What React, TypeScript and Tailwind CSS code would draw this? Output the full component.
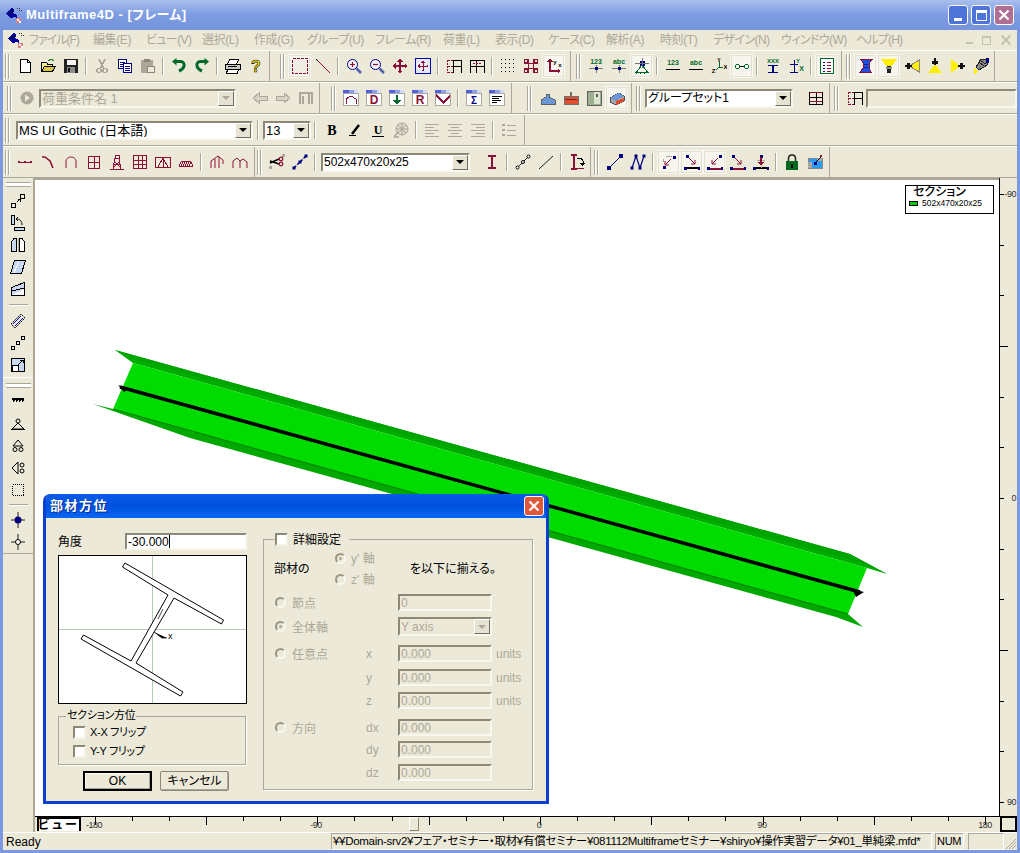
import React from "react";

const M = "#8B1038";
const N = "#000080";
const G = "#006A2A";
const K = "#000";
const D = "#ACA899";
const FACE = "bg-[#ECE9D8]";

const S = ({ children, s = 16, crisp = true }: { children: React.ReactNode; s?: number; crisp?: boolean }) => (
  <svg width={s} height={s} viewBox="0 0 16 16" fill="none" shapeRendering={crisp ? "crispEdges" : "geometricPrecision"}>
    {children}
  </svg>
);

const Node = ({ x, y, c = N, r = 1.5 }: { x: number; y: number; c?: string; r?: number }) => (
  <rect x={x - r} y={y - r} width={r * 2} height={r * 2} fill={c} />
);

const Tiny = ({ x, y, t, c = G, z = 7, w = 700 }: { x: number; y: number; t: string; c?: string; z?: number; w?: number }) => (
  <text x={x} y={y} fontSize={z} fontWeight={w} fill={c} fontFamily="Liberation Sans" textAnchor="middle" shapeRendering="geometricPrecision">
    {t}
  </text>
);

const Ln = ({ d, c = M, w = 1 }: { d: string; c?: string; w?: number }) => <path d={d} stroke={c} strokeWidth={w} />;

const Win = ({ children }: { children: React.ReactNode }) => (
  <S>
    <rect x="0.5" y="3.5" width="15" height="12" fill="#fff" stroke={D} />
    <rect x="0" y="0" width="15" height="3" fill="#5060E0" />
    <rect x="6" y="0" width="5" height="3" fill="#8C9CF0" />
    <rect x="11" y="0" width="4" height="3" fill="#D0D8FF" />
    {children}
  </S>
);

const Frame = ({ dash }: { dash: "left" | "mid" }) => (
  <S>
    <Ln c={K} d="M7.5 2V15M15.5 2V15M7.5 2.5H15.5M7.5 8.5H15.5" />
    {dash === "left" ? (
      <path d="M1.5 2V15M1.5 2.5H7M1.5 8.5H7M1.5 14.5H7" stroke={M} strokeDasharray="2 1" />
    ) : (
      <Ln c={K} d="M1.5 2V15M1.5 2.5H7M1.5 8.5H7" />
    )}
    {dash === "mid" && <path d="M7.5 4V8M4 5.5H12" stroke={M} strokeDasharray="2 1" />}
  </S>
);

const icons: Record<string, React.ReactNode> = {
  new: <S><path d="M3.5 1.5H10.5L13.5 4.5V14.5H3.5Z" fill="#fff" stroke={K} /><path d="M10.5 1.5V4.5H13.5" stroke={K} /></S>,
  open: <S><path d="M1.5 4.5H6.5L7.5 6H12.5V13.5H1.5Z" fill="#F4E88C" stroke={K} /><path d="M4.5 8.5H15.5L12.5 13.5H1.5Z" fill="#D8C848" stroke={K} /><path d="M9 3C10 1 12 1 14 3" stroke="#2A7A2A" strokeWidth="1.5" /></S>,
  save: <S><rect x="1" y="1" width="14" height="14" fill="#222" /><rect x="3.5" y="1.5" width="9" height="5" fill="#F4F4F0" /><rect x="4" y="9" width="8" height="6" fill="#8C8C8C" /><rect x="5" y="10" width="2" height="4" fill="#111" /></S>,
  cut: <S><Ln c={D} w={1.5} d="M5 1L9.5 10M11 1L6.5 10" /><circle cx="5" cy="12.5" r="2.2" stroke={D} strokeWidth="1.5" /><circle cx="11" cy="12.5" r="2.2" stroke={D} strokeWidth="1.5" /></S>,
  copy: <S><rect x="1.5" y="1.5" width="8" height="9" fill="#fff" stroke={N} /><Ln c={N} d="M3 4H8M3 6H8M3 8H8" /><rect x="6.5" y="5.5" width="8" height="9" fill="#fff" stroke={N} /><Ln c={N} d="M8 8H13M8 10H13M8 12H13" /></S>,
  paste: <S><rect x="1" y="2" width="12" height="13" fill={D} rx="1" /><rect x="4" y="0.5" width="6" height="3" fill="#8C8878" /><rect x="7.5" y="8.5" width="7" height="6" fill="#ECE9D8" stroke="#8C8878" /></S>,
  undo: <S crisp={false}><path d="M3.5 3.5H9.5C12.5 3.5 13.5 6 13 8C12.5 10.5 10.5 12 8 13" stroke={G} strokeWidth="3" /><path d="M1 3.5L5.5 0V7.5Z" fill={G} /></S>,
  redo: <S crisp={false}><path d="M12.5 3.5H6.5C3.5 3.5 2.5 6 3 8C3.5 10.5 5.5 12 8 13" stroke={G} strokeWidth="3" /><path d="M15 3.5L10.5 0V7.5Z" fill={G} /></S>,
  print: <S><path d="M4.5 1.5H13.5L11.5 6.5H2.5Z" fill="#fff" stroke={K} /><rect x="0.5" y="6.5" width="15" height="5" fill="#C8C8C0" stroke={K} /><path d="M2.5 11.5H13.5L12 15.5H1.5Z" fill="#fff" stroke={K} /><Ln c={K} d="M3 8.5H12" /></S>,
  help: <S crisp={false}><text x="8" y="13.5" textAnchor="middle" fontSize="16" fontWeight="700" fontFamily="Liberation Sans" fill="#FFF000" stroke="#000" strokeWidth="0.6">?</text></S>,
  rect: <S><rect x="0.5" y="0.5" width="15" height="15" stroke={M} strokeDasharray="3 1" fill="#F0EEE4" /></S>,
  line: <S><Ln c={K} d="M1 1L3 3" /><Ln d="M3 3L15 15" /></S>,
  zin: <S crisp={false}><circle cx="6.5" cy="6.5" r="5" stroke={N} fill="#F4F4F8" /><path d="M4 6.5H9M6.5 4V9" stroke={M} strokeWidth="1.2" /><path d="M10.5 10.5L15 15" stroke="#5060A8" strokeWidth="2.5" /></S>,
  zout: <S crisp={false}><circle cx="6.5" cy="6.5" r="5" stroke={N} fill="#F4F4F8" /><path d="M4 6.5H9" stroke={M} strokeWidth="1.2" /><path d="M10.5 10.5L15 15" stroke="#5060A8" strokeWidth="2.5" /></S>,
  pan: <S><Ln w={2} d="M8 2V14M2 8H14" /><path d="M8 0L11 3.5H5ZM8 16L11 12.5H5ZM0 8L3.5 5V11ZM16 8L12.5 5V11Z" fill={M} /></S>,
  fit: <S><rect x="0.5" y="0.5" width="15" height="15" stroke="#0000C0" fill="#E8E8F4" /><Ln w={1} d="M8 3V13M3 8H13" /><path d="M8 2L10 4.5H6ZM8 14L10 11.5H6ZM2 8L4.5 6V10ZM14 8L11.5 6V10Z" fill={M} /></S>,
  frameL: <Frame dash="left" />,
  frameM: <Frame dash="mid" />,
  dots: <S>{[1, 5, 9, 13].map((y) => [1, 5, 9, 13].map((x) => <rect key={`${x}${y}`} x={x} y={y} width="1" height="1" fill={K} />))}</S>,
  grid: <S><Ln d="M1 5.5H15M1 10.5H15M5.5 1V15M10.5 1V15" /><rect x="1.5" y="1.5" width="3" height="3" stroke={M} /><rect x="11.5" y="1.5" width="3" height="3" stroke={M} /><rect x="1.5" y="11.5" width="3" height="3" stroke={M} /><rect x="11.5" y="11.5" width="3" height="3" stroke={M} /></S>,
  axis: <S><Ln w={1.5} d="M4 3V13H13" /><path d="M4 0L7 3.5H1ZM15 13L11.5 10V16Z" fill={M} /><Tiny x={9} y={6} t="y" c={K} z={6} /><Tiny x={14} y={9} t="x" c={K} z={6} /></S>,
  n123: <S><Tiny x={8} y={6} t="123" /><Ln c="#777" d="M1 10.5H15M8 7V15" /><Node x={8} y={10.5} /></S>,
  nabc: <S><Tiny x={8} y={6} t="abc" /><Ln c="#777" d="M1 10.5H15M8 7V15" /><Node x={8} y={10.5} /></S>,
  sup: <S><Node x={8} y={5} r={2.5} /><Ln c="#777" d="M1 5.5H15M8 0V10" /><Ln c={G} d="M8 7L2.5 14M8 7L13.5 14M1 14.5H15" /><Ln c={G} d="M3 15L2 16M7 15L6 16M11 15L10 16" /></S>,
  m123: <S><Tiny x={8} y={7} t="123" /><Ln c={K} d="M1 11.5H15" /></S>,
  mabc: <S><Tiny x={8} y={7} t="abc" /><Ln c={K} d="M1 11.5H15" /></S>,
  lcs: <S><Ln c={G} d="M8 3V9L5 12M8 9H12" /><Tiny x={8} y={4} t="Y" c={K} z={5} /><Tiny x={14.5} y={11} t="X" c={K} z={6} /><Tiny x={2.5} y={15} t="Z" c={K} z={6} /></S>,
  link: <S><circle cx="3.5" cy="8.5" r="2" stroke={G} /><circle cx="12.5" cy="8.5" r="2" stroke={G} /><Ln c={K} d="M6 8.5H10" /></S>,
  xxx: <S><Tiny x={8} y={5} t="XXX" z={6} /><Ln c={N} w={1.5} d="M3 7.5H13M3 14.5H13M8 7V15" /></S>,
  ybar: <S><Tiny x={10} y={5} t="Y" c={G} z={6} /><Ln c={N} d="M2 6.5H10M2 14.5H10M6 2V15" /><Tiny x={13.5} y={12.5} t="X" c={G} z={7} /></S>,
  table: <S><rect x="1.5" y="0.5" width="13" height="15" fill="#fff" stroke={G} /><Ln c={N} d="M4 4H6M4 7H6M4 10H6M4 13H6" /><Ln d="M8 4H12M8 7H12M8 10H12M8 13H12" /></S>,
  hbeam: <S><path d="M3 1.5H14L11 5V10L13 14.5H2L5 10V5Z" fill="#2050E0" stroke={M} /><Ln c="#0A2090" d="M6 6H10M6 9H10" /></S>,
  ylamp: <S><path d="M0 1H16L10 9H6Z" fill="#FFF000" /><path d="M6 8H10L9.5 15H6.5Z" fill="#222" /><rect x="5" y="9" width="6" height="2" fill="#888" /></S>,
  lampL: <S><path d="M15 2V14L7 9V7Z" fill="#FFF000" stroke="#888" /><path d="M1 7H8V9H1Z" fill="#111" /><rect x="3" y="5" width="3" height="6" fill="#111" /></S>,
  lampT: <S><path d="M8 6L15 15H1Z" fill="#FFF000" /><path d="M7 0H9V7H7Z" fill="#111" /><rect x="5" y="3" width="6" height="3" fill="#111" /></S>,
  lampR: <S><path d="M1 1V15L9 9V7Z" fill="#FFF000" /><path d="M8 7H15V9H8Z" fill="#111" /><rect x="10" y="5" width="3" height="6" fill="#111" /></S>,
  lampC: <S><path d="M8 1H14V7L6 12L3 9Z" fill="#888" stroke="#222" /><rect x="13" y="0" width="3" height="5" fill={N} /><path d="M1 10L5 13L3 16H1Z" fill="#FFF000" /><Ln c="#222" d="M6 4L11 8M8 3L13 6" /></S>,
  play: <S crisp={false}><circle cx="8" cy="8" r="6.5" fill={D} /><path d="M6 4.5L11 8L6 11.5Z" fill="#ECE9D8" /></S>,
  aL: <S><path d="M1 8L7 3V6H15V10H7V13Z" fill="#D8D4C4" stroke={D} /></S>,
  aR: <S><path d="M15 8L9 3V6H1V10H9V13Z" fill="#D8D4C4" stroke={D} /></S>,
  fG: <S><Ln c={D} d="M2 14V3H14V14M5 14V6M11 14V3" w={1.5} /></S>,
  lcFrame: <Win><Ln d="M3 14V9L8 6L13 9V14" /></Win>,
  lcD: <Win><Tiny x={8} y={14} t="D" c={M} z={12} /></Win>,
  lcArrow: <Win><Ln c={G} w={2} d="M8 5V12" /><path d="M4 10H12L8 15Z" fill={G} /></Win>,
  lcR: <Win><Tiny x={8} y={14} t="R" c={M} z={12} /></Win>,
  lcV: <Win><path d="M1 4L8 11L15 4V7L8 14L1 7Z" fill={M} /></Win>,
  lcSum: <Win><Tiny x={8} y={13.5} t="Σ" c={N} z={10} /></Win>,
  lcList: <Win><Ln c={K} d="M3 6H13M3 8H10M3 10H12M3 12H8" /></Win>,
  cap: <S><path d="M1 14V10L6 7V4H9V7L15 10V14Z" fill="#6C98D8" stroke="#606060" /></S>,
  box: <S><rect x="1" y="6" width="14" height="8" fill="#E05030" stroke="#707070" /><rect x="7" y="2" width="2" height="4" fill="#707070" /><rect x="2" y="9" width="12" height="1" fill="#703020" /></S>,
  split: <S><rect x="1" y="1" width="14" height="14" fill="#9CB090" stroke="#606060" /><rect x="8" y="2" width="6" height="12" fill="#DCE4D0" /><rect x="10" y="4" width="2" height="3" fill="#606060" /></S>,
  block: <S><path d="M1 8L10 3L15 6V11L7 15L1 12Z" fill="#A8A8A8" stroke="#505050" /><path d="M1 8L7 11L15 6L10 3Z" fill="#6C98D8" /><path d="M7 11V15L15 11V8Z" fill="#E05030" /></S>,
  gr: <S><rect x="1.5" y="2.5" width="13" height="12" stroke={K} /><Ln c={K} d="M8 3V14M2 7.5H14" /><Ln d="M2 11.5H14M8 11V14M2 2.5H14" /></S>,
  bold: <S crisp={false}><text x="8" y="13" textAnchor="middle" fontSize="14" fontWeight="700" fontFamily="Liberation Serif" fill="#000">B</text></S>,
  ital: <S><path d="M12 3L5 12" stroke="#000" strokeWidth="2.5" shapeRendering="geometricPrecision" /><Ln c={K} d="M2 13.5H9" /></S>,
  und: <S crisp={false}><text x="8" y="11.5" textAnchor="middle" fontSize="12" fontWeight="700" fontFamily="Liberation Serif" fill="#000">U</text><path d="M2 14.5H14" stroke="#000" /></S>,
  ball: <S crisp={false}><circle cx="9" cy="7" r="6" stroke={D} fill="#DDD9C8" /><path d="M3 7H15M9 1V13M5 3L13 11M13 3L5 11" stroke={D} /><path d="M1 15L5 10M1 15H6" stroke={D} strokeWidth="1.5" /></S>,
  al: <S><Ln c={D} d="M1 2.5H15M1 5.5H10M1 8.5H15M1 11.5H10M1 14.5H15" /></S>,
  ac: <S><Ln c={D} d="M1 2.5H15M4 5.5H12M1 8.5H15M4 11.5H12M1 14.5H15" /></S>,
  ar: <S><Ln c={D} d="M1 2.5H15M6 5.5H15M1 8.5H15M6 11.5H15M1 14.5H15" /></S>,
  li: <S><Ln c={D} w={2} d="M1 3H4M1 8H4M1 13H4" /><Ln c={D} d="M6 3H15M6 8H15M6 13H15" /></S>,
  b1: <S><Ln d="M2 8H14" /><Node x={2} y={8} c={M} r={1} /><Node x={8} y={8} c={M} r={1} /><Node x={14} y={8} c={M} r={1} /></S>,
  b2: <S crisp={false}><path d="M2 3H5L10 7L13 14" stroke={M} strokeWidth="1.6" /></S>,
  b3: <S crisp={false}><path d="M3 14V8C3 4 6 3 8 3C10 3 13 4 13 8V14" stroke={M} /></S>,
  b4: <S><rect x="2.5" y="2.5" width="11" height="12" stroke={M} /><Ln d="M8 3V15M2 8.5H14" /></S>,
  b5: <S><Ln d="M1 15H15M4 15L6 4H10L12 15M5 10H11M5 7L11 13M11 7L5 13" /><rect x="6" y="1" width="4" height="3" stroke={M} /></S>,
  b6: <S><rect x="1.5" y="1.5" width="13" height="13" stroke={M} /><Ln d="M6 2V14M10 2V14M2 6H14M2 10H14" /></S>,
  b7: <S><rect x="0.5" y="3.5" width="15" height="10" stroke={M} /><Ln d="M8 4V13M8 4L3 13M8 4L13 13" /></S>,
  b8: <S><Ln d="M3 7.5H13M1 12.5H15M3 8L1 12M5 8L3 12M7 8L5 12M9 8L7 12M11 8L9 12M13 8L11 12M13 8L15 12" /></S>,
  r1: <S crisp={false}><path d="M2 14V7L9 2L14 6V10M6 14V5M10 14V3" stroke={M} /></S>,
  r2: <S crisp={false}><path d="M1 14V7L5 4L8 7L11 5L15 8V14M8 14V7" stroke={M} /></S>,
  sc: <S crisp={false}><rect x="0" y="12" width="3" height="3" fill={D} /><rect x="13" y="0" width="3" height="3" fill={D} /><path d="M1 7L10 10M1 9L10 5" stroke="#000" strokeWidth="1.5" /><circle cx="12" cy="5" r="1.8" stroke={M} strokeWidth="1.3" /><circle cx="12" cy="10" r="1.8" stroke={M} strokeWidth="1.3" /></S>,
  sl: <S crisp={false}><path d="M2 14L14 2" stroke={N} strokeDasharray="3 1.5" strokeWidth="1.5" /><Node x={2} y={14} /><Node x={8} y={8} /><Node x={14} y={2} /></S>,
  ibar: <S><Ln w={2} d="M4 2H12M4 14H12M8 2V14" /></S>,
  nl: <S crisp={false}><path d="M2 14L14 2" stroke="#222" /><circle cx="2.5" cy="13.5" r="1.5" fill="#fff" stroke="#000" /><circle cx="8" cy="8" r="1.5" fill="#fff" stroke="#000" /><circle cx="13.5" cy="2.5" r="1.5" fill="#fff" stroke="#000" /></S>,
  pl: <S crisp={false}><path d="M1 15L15 2" stroke="#222" /></S>,
  rot: <S><Ln w={2} d="M2 1H8M2 15H8M5 1V15" /><Ln c={M} d="M8 14H15" /><Ln c={K} d="M8 4H12L14 7V10" /><path d="M11 9H16L13.5 12Z" fill={K} /></S>,
  nline: <S crisp={false}><path d="M2 14L14 2" stroke={N} /><Node x={2} y={14} r={2} /><Node x={14} y={2} r={2} /></S>,
  nn: <S crisp={false}><path d="M2 14L6 2L10 14L14 2" stroke={N} strokeWidth="1.2" /><Node x={2} y={14} /><Node x={6} y={2} /><Node x={10} y={14} /><Node x={14} y={2} /></S>,
  pn: <S><Node x={3} y={13} /><Node x={13} y={3} /><Ln c={D} d="M5 2H11M2 5V8" /><path d="M10 5L4 11M4 11V7M4 11H8" stroke={M} shapeRendering="geometricPrecision" /></S>,
  pb: <S><Node x={3} y={2} /><Ln c={K} w={1.5} d="M1 14H15" /><Node x={1} y={14} /><Node x={15} y={14} /><path d="M5 4L11 10M11 10V6M11 10H7" stroke={M} shapeRendering="geometricPrecision" /></S>,
  pm: <S><Node x={13} y={2} /><Ln c={M} w={2} d="M1 14.5H15" /><Node x={1} y={14.5} /><Node x={15} y={14.5} /><path d="M11 4L5 10M5 10V6M5 10H9" stroke={M} shapeRendering="geometricPrecision" /></S>,
  pd: <S><Node x={3} y={2} /><Ln d="M1 14.5H15" w={2} /><Node x={1} y={14} /><Node x={15} y={14} /><path d="M5 4L11 10M11 10V6M11 10H7" stroke={M} shapeRendering="geometricPrecision" /></S>,
  pv: <S><Node x={8} y={2} /><Ln c={K} w={1.5} d="M1 14H15" /><Node x={1} y={14} /><Node x={15} y={14} /><Ln c={D} d="M8 10V14M4 6H12" /><Ln w={2} d="M8 3V8" /><path d="M5 8H11L8 12Z" fill={M} /></S>,
  lock: <S crisp={false}><path d="M4.5 7V4.5C4.5 2.5 6 1 8 1C10 1 11.5 2.5 11.5 4.5V7" stroke="#222" strokeWidth="1.5" /><rect x="2" y="7" width="12" height="9" fill="#006A1E" /><rect x="7" y="10" width="2" height="4" fill="#000" /></S>,
  map: <S><path d="M1 4H15V14H1Z" fill="#2C9CF0" stroke="#888" /><path d="M1 8H5V14H1ZM10 4H15V7H10Z" fill="#A8A8A0" /><Node x={8} y={9} /><Ln c={K} d="M9 8L14 3" /><Node x={14} y={2} c={M} r={1} /></S>,
  l1: <S><rect x="1.5" y="10.5" width="4" height="4" stroke={K} /><rect x="10.5" y="1.5" width="4" height="4" stroke={K} /><path d="M7 9L10 6M10 6V8.5M10 6H7.5" stroke={K} /></S>,
  l2: <S><rect x="1.5" y="0.5" width="3" height="9" fill="#C8D8F0" stroke={K} /><rect x="4.5" y="12.5" width="10" height="3" fill="#C8D8F0" stroke={K} /><path d="M12 10C12 6 10 4 6 4M6 4L8 2M6 4L8 6" stroke={K} shapeRendering="geometricPrecision" /></S>,
  l3: <S><path d="M6.5 1.5H4L1.5 5V14.5H6.5Z" fill="#C8D8F0" stroke={K} /><path d="M9.5 1.5H12L14.5 5V14.5H9.5Z" fill="#fff" stroke={K} /><Ln c={D} d="M8 1V15" /></S>,
  l4: <S><path d="M4.5 1.5H15.5L11.5 14.5H0.5Z" fill="#C8D8F0" stroke={K} /><path d="M9 2L4 14" stroke="#fff" /></S>,
  l5: <S><path d="M1.5 6.5L14.5 1.5V14.5H1.5Z" fill="#C8D8F0" stroke={K} /><path d="M2 14L14 8V14Z" fill="#fff" /><path d="M2 10L14 7" stroke={K} /></S>,
  l6: <S crisp={false}><path d="M1 11L11 1L15 5L5 15Z" stroke={K} strokeDasharray="2 1" /><path d="M3 11L11 3M5 13L13 5" stroke="#0000C0" /></S>,
  l7: <S><rect x="1.5" y="11.5" width="3" height="3" stroke={K} /><rect x="6.5" y="6.5" width="3" height="3" stroke={K} /><rect x="11.5" y="1.5" width="3" height="3" stroke={K} /></S>,
  l8: <S><rect x="1.5" y="1.5" width="13" height="13" fill="#C8D8F0" stroke={K} /><rect x="2" y="8" width="6" height="6" fill="#fff" stroke={K} /><path d="M8 8L13 3M13 3V6M13 3H10" stroke={K} /></S>,
  l9: <S><Ln c={K} d="M2 4.5H14" w={2} /><Ln c={K} d="M3 8L5 5M6 8L8 5M9 8L11 5M12 8L14 5" /></S>,
  l10: <S crisp={false}><circle cx="8" cy="5" r="2" stroke={K} /><path d="M8 7L2 13H14ZM1 13.5H15" stroke={K} /></S>,
  l11: <S crisp={false}><path d="M8 2L3 8H13Z" stroke={K} /><circle cx="5" cy="11.5" r="2" stroke={K} /><circle cx="11" cy="11.5" r="2" stroke={K} /></S>,
  l12: <S crisp={false}><path d="M8 2L2 8L8 14Z" stroke={K} /><circle cx="12" cy="5" r="2" stroke={K} /><circle cx="12" cy="11" r="2" stroke={K} /></S>,
  l13: <S><rect x="2.5" y="2.5" width="11" height="11" stroke={K} strokeDasharray="1 1" /></S>,
  l14: <S crisp={false}><path d="M8 0V16M1 8H15" stroke="#222" /><circle cx="8" cy="8" r="3.5" fill={N} /></S>,
  l15: <S crisp={false}><path d="M8 0V16M1 8H15" stroke="#222" /><circle cx="8" cy="8" r="2.5" fill="#fff" stroke="#000" /></S>,
};

const Btn = ({ i, sel, short }: { i: string; sel?: boolean; short?: boolean }) => (
  <div className={`flex w-[23px] shrink-0 items-center justify-center ${short ? "h-[22px]" : "h-[24px]"} ${sel ? "border border-[#f8f7f2] bg-[#F6F5EE] shadow-[inset_0_0_0_1px_#E4E1D2]" : ""}`}>
    {icons[i]}
  </div>
);

const Sep = () => (
  <div className="flex w-[8px] shrink-0 justify-center">
    <div className="h-[18px] w-[2px] border-r border-white bg-[#ACA899]" />
  </div>
);

const Grip = () => (
  <div className="flex h-[25px] w-[5px] shrink-0 justify-between">
    <div className="w-[2px] border-l border-[#ACA899] bg-white" />
    <div className="w-[2px] border-l border-[#ACA899] bg-white" />
  </div>
);

const Tb = ({ className = "", children }: { className?: string; children: React.ReactNode }) => (
  <div className={`flex h-full shrink-0 items-center border-r border-r-[#ACA899] ${className}`}>{children}</div>
);

const Row = ({ children }: { children: React.ReactNode }) => (
  <div className="flex h-[32px] shrink-0 items-center border-t border-t-white border-b border-b-[#ACA899]">{children}</div>
);

const Sunken = "border-2 border-t-[#8C8878] border-l-[#8C8878] border-r-[#F8F7F0] border-b-[#F8F7F0]";

const Arrow = ({ off }: { off?: boolean }) => (
  <div className="flex h-full w-[16px] shrink-0 items-center justify-center border border-t-white border-l-white border-r-[#716F64] border-b-[#716F64] bg-[#E6E3D2]">
    <div className={`h-0 w-0 border-x-[4px] border-t-[4px] border-x-transparent ${off ? "border-t-[#ACA899]" : "border-t-black"}`} />
  </div>
);

const Combo = ({ t, cls, off, text = "text-[12px]" }: { t: string; cls: string; off?: boolean; text?: string }) => (
  <div className={`flex h-[19px] shrink-0 items-center ${Sunken} ${cls} ${off ? "bg-[#ECE9D8] text-[#ACA899]" : "bg-white text-black"}`}>
    <span className={`min-w-0 flex-1 truncate pl-[1px] leading-none ${text}`}>{t}</span>
    <Arrow off={off} />
  </div>
);

const menu: [string, string][] = [
  ["ファイル(F)", "w-[64px] tracking-[-1px]"], ["編集(E)", "w-[53px] tracking-[-0.4px]"], ["ビュー(V)", "w-[56px] tracking-[-0.6px]"], ["選択(L)", "w-[52px] tracking-[-0.4px]"],
  ["作成(G)", "w-[53px] tracking-[-0.4px]"], ["グループ(U)", "w-[68px] tracking-[-0.6px]"], ["フレーム(R)", "w-[68px] tracking-[-0.6px]"], ["荷重(L)", "w-[52px] tracking-[-0.4px]"],
  ["表示(D)", "w-[53px] tracking-[-0.4px]"], ["ケース(C)", "w-[58px] tracking-[-0.6px]"], ["解析(A)", "w-[54px] tracking-[-0.4px]"], ["時刻(T)", "w-[53px] tracking-[-0.4px]"],
  ["デザイン(N)", "w-[68px] tracking-[-0.6px]"], ["ウィンドウ(W)", "w-[75px] tracking-[-0.6px]"], ["ヘルプ(H)", "w-[50px] tracking-[-0.8px]"],
];

const Logo = () => (
  <svg width="18" height="16" viewBox="0 0 18 16" shapeRendering="crispEdges">
    <path d="M1 6L7 1L10 3L7 5L12 8L12 11L9 10L6 11L3 9Z" fill="#0000A0" />
    <path d="M3 6L7 3L9 5L4 8Z" fill="#000050" />
    <path d="M11 11H16V16H11Z" fill="#E08080" />
    <path d="M12 12H14V14H12ZM14 14H16V16H14Z" fill="#fff" />
    <path d="M12 1H13V2H12ZM14 1H15V2H14ZM16 3H17V4H16ZM14 3H15V4H14Z" fill="#333" />
  </svg>
);

const Radio = ({ on }: { on?: boolean }) => (
  <div className="flex h-[11px] w-[11px] shrink-0 items-center justify-center rounded-full border-2 border-t-[#9a9684] border-l-[#9a9684] border-r-[#F8F7F0] border-b-[#F8F7F0]">
    {on && <div className="h-[3px] w-[3px] rounded-full bg-[#ACA899]" />}
  </div>
);

const Check = () => <div className="h-[13px] w-[13px] shrink-0 border-2 border-t-[#8C8878] border-l-[#8C8878] border-r-[#F4F2E6] border-b-[#F4F2E6] bg-white" />;

const Field = ({ v }: { v: string }) => (
  <div className={`flex h-[17px] w-[94px] shrink-0 items-center pl-[1px] text-[12px] leading-none text-[#ACA899] ${Sunken}`}>{v}</div>
);

const FRow = ({ r, lab, sub, v, u, cls, sel }: { r?: boolean; lab?: string; sub?: string; v?: string; u?: boolean; cls: string; sel?: boolean }) => (
  <div className={`flex h-[17px] items-center pl-[11px] text-[12px] leading-none text-[#ACA899] ${cls}`}>
    <div className="flex w-[91px] shrink-0 items-center gap-[6px]">
      {lab && <Radio on={r} />}
      {lab && <span className="pt-[2px]">{lab}</span>}
    </div>
    <div className="w-[32px] shrink-0 pt-[1px]">{sub}</div>
    {sel ? <Combo t="Y axis" cls="w-[94px]" off /> : <Field v={v || ""} />}
    {u && <span className="ml-[4px]">units</span>}
  </div>
);

const Cross = ({ c = "stroke-white" }: { c?: string }) => (
  <svg width="12" height="12" viewBox="0 0 12 12"><path d="M1.5 1.5L10.5 10.5M10.5 1.5L1.5 10.5" className={c} strokeWidth="2.2" /></svg>
);

const TBtn = ({ cls, children }: { cls: string; children: React.ReactNode }) => (
  <div className={`flex h-[20px] w-[20px] items-center justify-center rounded-[3px] border border-white ${cls}`}>{children}</div>
);

const bottomTicks = Array.from({ length: 25 }, (_, i) => i);
const rightTicks = Array.from({ length: 13 }, (_, i) => i);
const section = "M122.5 567L125 563L223.5 620L221.5 624L174 598L136 663L183 692L180.5 696L81 639L83.5 635L131 661L168 595Z";

export default function App() {
  return (
    <div className="relative flex h-[853px] w-[1020px] flex-col overflow-hidden bg-[#7C98DE] font-['Liberation_Sans','Noto_Sans_CJK_JP',sans-serif] text-[12px] text-black [font-feature-settings:'palt']">
      {/* title bar */}
      <div className="flex h-[30px] shrink-0 items-center bg-gradient-to-b from-[#A9C0EE] via-[#7C9BE0] to-[#7694DC] pl-[5px] pr-[6px]">
        <Logo />
        <span className="ml-[3px] text-[13px] font-bold tracking-[0.5px] text-white">Multiframe4D - [フレーム]</span>
        <div className="ml-auto flex gap-[3px]">
          <TBtn cls="bg-[#4F74D8] items-end pb-[3px]"><div className="h-[3px] w-[8px] bg-white" /></TBtn>
          <TBtn cls="bg-[#4F74D8]"><div className="h-[11px] w-[11px] border border-t-[3px] border-white" /></TBtn>
          <TBtn cls="bg-[#AE6F92]"><Cross /></TBtn>
        </div>
      </div>
      <div className={`mx-[3px] flex min-h-0 flex-1 flex-col ${FACE}`}>
        {/* menu */}
        <div className="flex h-[20px] shrink-0 items-center pl-[4px] text-[12px] text-[#ACA899]">
          <Logo />
          <div className="ml-[4px] flex">
            {menu.map(([t, w]) => (
              <span key={t} className={`whitespace-nowrap ${w}`}>{t}</span>
            ))}
          </div>
          <div className="ml-auto flex items-center gap-[9px] pr-[5px]">
            <div className="mt-[6px] h-[2px] w-[7px] bg-[#C0C4B0]" />
            <div className="h-[9px] w-[9px] border border-t-2 border-[#C0C4B0]" />
            <Cross c="stroke-[#C0C4B0]" />
          </div>
        </div>

        <Row>
          <Tb className="pr-[2px]">
            <div className="ml-[2px] mr-[3px]"><Grip /></div>
            <Btn i="new" /><Btn i="open" /><Btn i="save" /><Sep /><Btn i="cut" /><Btn i="copy" /><Btn i="paste" /><Sep /><Btn i="undo" /><Btn i="redo" /><Sep /><Btn i="print" /><Btn i="help" />
          </Tb>
          <Tb className="ml-[8px] pr-[5px]">
            <div className="ml-[2px] mr-[3px]"><Grip /></div>
            <Btn i="rect" sel /><Btn i="line" /><Sep /><Btn i="zin" /><Btn i="zout" /><Btn i="pan" /><Btn i="fit" /><Sep /><Btn i="frameL" /><Btn i="frameM" /><Sep /><Btn i="dots" /><Btn i="grid" /><Btn i="axis" sel />
          </Tb>
          <Tb className="ml-[3px] pr-[3px]">
            <div className="ml-[2px] mr-[3px]"><Grip /></div>
            <Btn i="n123" /><Btn i="nabc" /><Btn i="sup" sel /><Sep /><Btn i="m123" /><Btn i="mabc" /><Btn i="lcs" /><Btn i="link" sel /><Sep /><Btn i="xxx" /><Btn i="ybar" /><Sep /><Btn i="table" sel />
          </Tb>
          <Tb className="ml-[2px] pr-[2px]">
            <div className="ml-[2px] mr-[3px]"><Grip /></div>
            <Btn i="hbeam" sel /><Btn i="ylamp" sel /><Btn i="lampL" /><Btn i="lampT" /><Btn i="lampR" /><Btn i="lampC" />
          </Tb>
        </Row>

        <Row>
          <Tb className="pr-[2px]">
            <div className="ml-[4px] mr-[3px]"><Grip /></div>
            <Btn i="play" />
            <Combo t="荷重条件名 1" cls="w-[197px] ml-[1px]" off text="text-[13px]" />
            <div className="ml-[12px] flex"><Btn i="aL" /><Btn i="aR" /><Btn i="fG" /></div>
          </Tb>
          <Tb className="ml-[9px] pr-[3px]">
            <div className="ml-[2px] mr-[3px]"><Grip /></div>
            <Btn i="lcFrame" /><Btn i="lcD" /><Btn i="lcArrow" /><Btn i="lcR" /><Btn i="lcV" /><Sep /><Btn i="lcSum" /><Btn i="lcList" />
          </Tb>
          <Tb className="ml-[13px] pr-[3px]">
            <div className="ml-[2px] mr-[4px]"><Grip /></div>
            <Btn i="cap" /><Btn i="box" /><Btn i="split" /><Btn i="block" sel />
          </Tb>
          <Tb className="ml-[2px] pr-[2px]">
            <div className="ml-[2px] mr-[4px]"><Grip /></div>
            <Combo t="グループセット1" cls="w-[148px]" />
            <div className="ml-[11px]"><Btn i="gr" /></div>
          </Tb>
          <div className="ml-[2px] flex min-w-0 flex-1 items-center">
            <div className="ml-[2px] mr-[4px]"><Grip /></div>
            <Btn i="frameL" />
            <div className={`h-[19px] min-w-0 flex-1 ${Sunken}`} />
          </div>
        </Row>

        <Row>
          <Tb className="pr-[4px]">
            <div className="ml-[2px] mr-[6px]"><Grip /></div>
            <Combo t="MS UI Gothic (日本語)" cls="w-[237px]" text="text-[13px]" />
            <div className="mx-[4px] h-[20px] w-[2px] border-r border-white bg-[#ACA899]" />
            <Combo t="13" cls="w-[48px]" text="text-[13px]" />
            <Sep />
            <div className="ml-[1px]"><Btn i="bold" /></div><Btn i="ital" /><Btn i="und" /><Btn i="ball" /><Sep /><Btn i="al" /><Btn i="ac" /><Btn i="ar" /><Sep /><Btn i="li" />
          </Tb>
        </Row>

        <Row>
          <Tb className="pr-[3px]">
            <div className="ml-[2px] mr-[3px]"><Grip /></div>
            <Btn i="b1" /><Btn i="b2" /><Btn i="b3" /><Btn i="b4" /><Btn i="b5" /><Btn i="b6" /><Btn i="b7" /><Btn i="b8" /><Sep /><Btn i="r1" /><Btn i="r2" />
          </Tb>
          <Tb className="pr-[2px]">
            <div className="ml-[2px] mr-[3px]"><Grip /></div>
            <Btn i="sc" /><Btn i="sl" /><Sep />
            <Combo t="502x470x20x25" cls="ml-[2px] w-[149px]" />
            <div className="ml-[10px]"><Btn i="ibar" /></div>
            <Sep /><Btn i="nl" /><Btn i="pl" /><Sep /><Btn i="rot" />
          </Tb>
          <Tb className="ml-[1px] pr-[3px]">
            <div className="ml-[2px] mr-[4px]"><Grip /></div>
            <Btn i="nline" /><Btn i="nn" /><Sep /><Btn i="pn" sel /><Btn i="pb" sel /><Btn i="pm" sel /><Btn i="pd" /><Btn i="pv" /><Sep /><Btn i="lock" /><Btn i="map" />
          </Tb>
        </Row>

        {/* work area */}
        <div className="flex min-h-0 flex-1">
          <div className="flex w-[32px] shrink-0 flex-col items-center border-r-2 border-r-[#ACA899]">
            <div className="flex w-full flex-col items-center border-b border-b-white pb-[1px]">
              <div className="mb-[3px] mt-[4px] h-[5px] w-[25px] border-y border-[#ACA899] bg-white" />
              <Btn short i="l1" /><Btn short i="l2" /><Btn short i="l3" /><Btn short i="l4" /><Btn short i="l5" />
              <div className="my-[4px] h-[2px] w-[19px] border-b border-white bg-[#ACA899]" />
              <Btn short i="l6" /><Btn short i="l7" /><Btn short i="l8" />
            </div>
            <div className="flex w-full flex-col items-center border-b border-b-[#ACA899]">
              <div className="mb-[3px] mt-[5px] h-[5px] w-[25px] border-y border-[#ACA899] bg-white" />
              <Btn short i="l9" /><Btn short i="l10" /><Btn short i="l11" /><Btn short i="l12" /><Btn short i="l13" />
              <div className="my-[3px] h-[2px] w-[19px] border-b border-white bg-[#ACA899]" />
              <Btn short i="l14" /><Btn short i="l15" />
            </div>
          </div>

          <div className="flex min-w-0 flex-1 flex-col">
            <div className="flex min-h-0 flex-1">
              <div className="relative min-w-0 flex-1 overflow-hidden border-t-2 border-t-[#ACA899] bg-white">
                <svg className="absolute inset-0" width="964" height="636" viewBox="35 180 964 636">
                  <path d="M115 350L850 554L887 574L867 568L133 363Z" fill="#00AE00" />
                  <path d="M115 350L850 554L887 574L858 562L130 358Z" fill="#00A400" />
                  <path d="M133 363L867 568L848 614L113 409Z" fill="#00DC00" />
                  <path d="M93 404L113 409L848 614L863 627L836 617L190 438Z" fill="#00A800" />
                  <path d="M113 409L848 614" stroke="#007A00" />
                  <path d="M120 387L860 592" stroke="#000" strokeWidth="3.5" />
                  <path d="M118 385L128 389L124 392ZM852 589L864 592L856 597Z" fill="#000" />
                </svg>
                <div className="absolute right-[5px] top-[5px] flex h-[29px] w-[89px] flex-col border border-black bg-white pl-[3px]">
                  <span className="ml-[4px] text-[12px] font-medium leading-[13px]">セクション</span>
                  <div className="flex items-center gap-[4px]">
                    <div className="h-[5px] w-[9px] border border-black bg-[#00CC00]" />
                    <span className="whitespace-nowrap text-[8.5px] leading-[9px]">502x470x20x25</span>
                  </div>
                </div>
              </div>
              <div className="relative w-[18px] shrink-0 border-l border-l-black">
                {rightTicks.map((i) => (
                  <div key={i} className={`absolute left-0 h-[1px] bg-black ${i % 3 === 0 && i % 6 !== 0 ? "w-[8px]" : "w-[4px]"}`} style={{ top: 16 + i * 50.67 }} />
                ))}
                {[["-90", 16], ["0", 320], ["90", 624]].map(([t, y]) => (
                  <span key={t} className="absolute right-[1px] text-[9px] leading-none tracking-[-0.5px] text-[#333]" style={{ top: (y as number) - 4 }}>{t}</span>
                ))}
              </div>
            </div>
            <div className="flex h-[16px] shrink-0">
              <div className="relative min-w-0 flex-1 border-t border-t-black">
                <div className="absolute left-[2px] top-0 z-10 flex h-[14px] w-[44px] items-center justify-center overflow-hidden whitespace-nowrap border-x-2 border-t-2 border-black bg-white text-[12px] font-bold leading-none tracking-[3px]">ビュー</div>
                {bottomTicks.map((i) => (
                  <div key={i} className={`absolute top-0 w-[1px] bg-black ${i % 3 === 0 ? "h-[8px]" : "h-[4px]"}`} style={{ left: 59.7 + i * 37.1 }} />
                ))}
                {[["-180", 59], ["-90", 281], ["0", 504], ["90", 727], ["180", 950]].map(([t, x]) => (
                  <span key={t} className="absolute top-[4px] -translate-x-1/2 text-[9px] leading-none tracking-[-0.5px] text-[#333]" style={{ left: x as number }}>{t}</span>
                ))}
                <div className="absolute left-[374px] top-0 h-[14px] w-[10px] border border-t-white border-l-white border-r-[#8C8878] border-b-[#8C8878] bg-[#ECE9D8]" />
              </div>
              <div className="h-[16px] w-[17px] shrink-0 border-2 border-black" />
            </div>
          </div>
        </div>

        {/* status bar */}
        <div className="flex h-[18px] shrink-0 items-stretch border-t border-t-white text-[12px] leading-none">
          <div className="flex w-[328px] shrink-0 items-center pl-[3px]">Ready</div>
          <div className="flex w-[601px] shrink-0 items-center overflow-hidden whitespace-nowrap border border-t-[#ACA899] border-l-[#ACA899] border-r-white border-b-white pl-[1px] text-[11.5px] tracking-[-0.3px]">¥¥Domain-srv2¥フェア・セミナー・取材¥有償セミナー¥081112Multiframeセミナー¥shiryo¥操作実習データ¥01_単純梁.mfd*</div>
          <div className="ml-[3px] flex w-[29px] shrink-0 items-center border border-t-[#ACA899] border-l-[#ACA899] border-r-white border-b-white pl-[1px] text-[11px] tracking-[-0.3px]">NUM</div>
          <div className="ml-[4px] w-[36px] shrink-0 border border-t-[#ACA899] border-l-[#ACA899] border-r-white border-b-white" />
          <svg className="ml-auto self-end" width="12" height="12" viewBox="0 0 12 12"><path d="M1 11L11 1M4 11L11 4M7 11L11 7" stroke="#ACA899" /></svg>
        </div>
      </div>
      <div className="h-[3px] shrink-0" />

      {/* dialog */}
      <div className="absolute left-[43px] top-[494px] flex h-[310px] w-[506px] flex-col overflow-hidden rounded-t-[7px] border-x-[3px] border-b-[3px] border-[#0A3FD0] bg-[#ECE9D8]">
        <div className="flex h-[24px] shrink-0 items-center bg-gradient-to-b from-[#0A5CE8] via-[#0050DE] to-[#0468F2] pl-[4px] pr-[2px]">
          <span className="text-[13px] font-bold tracking-[1.5px] text-white [text-shadow:1px_1px_#0A2C90]">部材方位</span>
          <div className="ml-auto flex h-[20px] w-[20px] items-center justify-center rounded-[3px] border border-white bg-[#E0583C]"><Cross /></div>
        </div>
        <div className="flex min-h-0 flex-1">
          <div className="w-[201px] shrink-0 pl-[12px] pt-[15px]">
            <div className="flex h-[17px] items-center">
              <span className="w-[67px] text-[12px]">角度</span>
              <div className={`flex h-[17px] w-[122px] items-center bg-white pl-[1px] text-[12px] leading-none ${Sunken}`}>-30.000<div className="h-[13px] w-[1px] bg-black" /></div>
            </div>
            <div className="mt-[5px] h-[149px] w-[189px] border border-black bg-white">
              <svg width="187" height="147" viewBox="59 556 187 147">
                <path d="M152.5 556V703M59 629.5H246" stroke="#B4CCB4" shapeRendering="crispEdges" />
                <path d={section} fill="#fff" stroke="#000" strokeWidth="1" />
                <path d="M154 632L162 638H167" stroke="#000" strokeWidth="0.7" />
                <path d="M163 609L158 619" stroke="#000" strokeWidth="0.7" />
                <text x="168" y="639" fontSize="9" fontFamily="Liberation Sans">x</text>
              </svg>
            </div>
            <div className="relative mt-[12px] h-[49px] w-[188px] border border-[#ACA899] shadow-[1px_1px_0_#fff]">
              <span className="absolute left-[7px] top-[-7px] whitespace-nowrap bg-[#ECE9D8] px-[1px] text-[11px] leading-none tracking-[-0.3px]">セクション方位</span>
              <div className="absolute left-0 top-[9px] flex w-full flex-col gap-[6px] pl-[14px] text-[11px] tracking-[-0.3px]">
                <div className="flex h-[13px] items-center gap-[4px]"><Check /><span className="leading-none">X-X フリップ</span></div>
                <div className="flex h-[13px] items-center gap-[4px]"><Check /><span className="leading-none">Y-Y フリップ</span></div>
              </div>
            </div>
            <div className="mt-[6px] flex h-[20px] gap-[8px] pl-[25px]">
              <div className="flex w-[69px] items-center justify-center border-2 border-black bg-[#ECE9D8] shadow-[inset_-1px_-1px_0_#ACA899,inset_1px_1px_0_#fff]">OK</div>
              <div className="flex w-[69px] items-center justify-center rounded-[2px] border border-[#8C8878] bg-[#ECE9D8] shadow-[inset_-1px_-1px_0_#ACA899]">キャンセル</div>
            </div>
          </div>
          <div className="ml-[16px] pt-[21px]">
            <div className="relative h-[251px] w-[270px] border border-[#ACA899] shadow-[1px_1px_0_#fff]">
              <div className="absolute left-[11px] top-[-7px] flex items-center gap-[5px] bg-[#ECE9D8] pr-[8px]">
                <Check /><span className="text-[12px] leading-none">詳細設定</span>
              </div>
              <div className="ml-[10px] mt-[8px] flex h-[42px] items-center">
                <span className="w-[61px]">部材の</span>
                <div className="flex w-[75px] flex-col text-[#ACA899]">
                  <div className="flex h-[21px] items-center gap-[5px]"><Radio on /><span>y' 軸</span></div>
                  <div className="flex h-[21px] items-center gap-[5px]"><Radio /><span>z' 軸</span></div>
                </div>
                <span>を以下に揃える。</span>
              </div>
              <FRow lab="節点" v="0" cls="mt-[4px]" />
              <FRow r lab="全体軸" sel cls="mt-[7px]" />
              <FRow lab="任意点" sub="x" v="0.000" u cls="mt-[10px]" />
              <FRow sub="y" v="0.000" u cls="mt-[7px]" />
              <FRow sub="z" v="0.000" u cls="mt-[6px]" />
              <FRow lab="方向" sub="dx" v="0.000" cls="mt-[10px]" />
              <FRow sub="dy" v="0.000" cls="mt-[5px]" />
              <FRow sub="dz" v="0.000" cls="mt-[6px]" />
            </div>
          </div>
        </div>
      </div>
    </div>
  );
}
